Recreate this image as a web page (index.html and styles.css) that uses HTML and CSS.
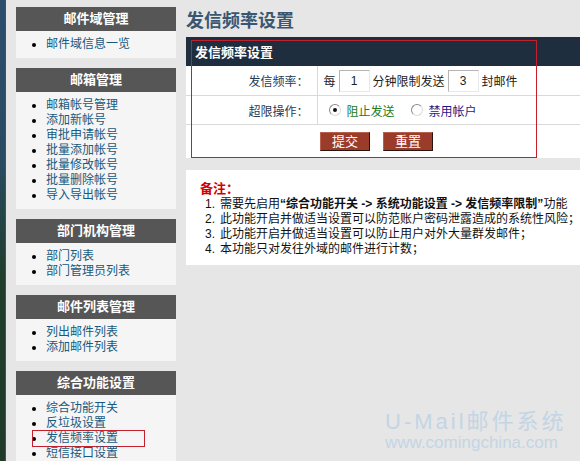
FILE: index.html
```html
<!DOCTYPE html>
<html lang="zh-CN">
<head>
<meta charset="utf-8">
<title>发信频率设置</title>
<link rel="stylesheet" href="styles.css">
</head>
<body>
<div class="page">
  <div class="strip"></div>
  <aside class="sidebar">
    <section class="panel">
      <h3 class="panel-head">邮件域管理</h3>
      <ul class="panel-list">
        <li><a>邮件域信息一览</a></li>
      </ul>
    </section>
    <section class="panel">
      <h3 class="panel-head">邮箱管理</h3>
      <ul class="panel-list">
        <li><a>邮箱帐号管理</a></li>
        <li><a>添加新帐号</a></li>
        <li><a>审批申请帐号</a></li>
        <li><a>批量添加帐号</a></li>
        <li><a>批量修改帐号</a></li>
        <li><a>批量删除帐号</a></li>
        <li><a>导入导出帐号</a></li>
      </ul>
    </section>
    <section class="panel">
      <h3 class="panel-head">部门机构管理</h3>
      <ul class="panel-list">
        <li><a>部门列表</a></li>
        <li><a>部门管理员列表</a></li>
      </ul>
    </section>
    <section class="panel">
      <h3 class="panel-head">邮件列表管理</h3>
      <ul class="panel-list">
        <li><a>列出邮件列表</a></li>
        <li><a>添加邮件列表</a></li>
      </ul>
    </section>
    <section class="panel">
      <h3 class="panel-head">综合功能设置</h3>
      <ul class="panel-list">
        <li><a>综合功能开关</a></li>
        <li><a>反垃圾设置</a></li>
        <li class="marked"><a>发信频率设置</a><span class="side-mark"></span></li>
        <li><a>短信接口设置</a></li>
      </ul>
    </section>
  </aside>

  <main class="main">
    <h1 class="title">发信频率设置</h1>
    <div class="form-wrap">
      <table class="form">
        <tr><th colspan="2" class="form-head">发信频率设置</th></tr>
        <tr class="row-a">
          <td class="label">发信频率：</td>
          <td class="value">
            <div class="inline">
              <span>每</span>
              <input class="num-input" type="text" value="1">
              <span>分钟限制发送</span>
              <input class="num-input" type="text" value="3">
              <span>封邮件</span>
            </div>
          </td>
        </tr>
        <tr class="row-b">
          <td class="label">超限操作：</td>
          <td class="value">
            <div class="inline radios">
              <span class="radio checked"></span><span class="opt-green">阻止发送</span>
              <span class="radio second"></span><span class="opt-navy">禁用帐户</span>
            </div>
          </td>
        </tr>
        <tr class="row-c">
          <td colspan="2" class="actions">
            <div class="btn-row">
              <button class="btn" type="button">提交</button>
              <button class="btn" type="button">重置</button>
            </div>
          </td>
        </tr>
      </table>
      <div class="annot"></div>
    </div>

    <div class="notes">
      <div class="notes-title">备注：</div>
      <div class="note"><span class="n">1.</span>需要先启用<b>“综合功能开关 -&gt; 系统功能设置 -&gt; 发信频率限制”</b>功能</div>
      <div class="note"><span class="n">2.</span>此功能开启并做适当设置可以防范账户密码泄露造成的系统性风险；</div>
      <div class="note"><span class="n">3.</span>此功能开启并做适当设置可以防止用户对外大量群发邮件；</div>
      <div class="note"><span class="n">4.</span>本功能只对发往外域的邮件进行计数；</div>
    </div>
  </main>

  <div class="watermark">
    <div class="wm-1">U-Mail邮件系统</div>
    <div class="wm-2">www.comingchina.com</div>
  </div>
</div>
</body>
</html>
```

FILE: styles.css
```css
html, body {
  margin: 0;
  padding: 0;
  overflow: hidden;
  width: 580px;
  height: 461px;
}

body {
  background: #e6e6e6;
  font-family: "Liberation Sans", "Noto Sans CJK SC", sans-serif;
  font-size: 12px;
  color: #222;
}

.page {
  display: flex;
  position: relative;
  height: 461px;
  align-items: flex-start;
}

.strip {
  width: 6px;
  align-self: stretch;
  flex-shrink: 0;
  background: linear-gradient(to bottom, #2d4d6d 0%, #2a4a62 35%, #203e2c 60%, #1f3a28 100%);
  box-shadow: inset -1px 0 0 #3c4c8c;
}

.sidebar {
  width: 160px;
  flex-shrink: 0;
  padding: 7px 0 0 10px;
  display: flex;
  flex-direction: column;
  gap: 10px;
}

.panel {
  background: #f5f5f5;
}

.panel-head {
  margin: 0;
  height: 24px;
  line-height: 24px;
  background: #565656;
  color: #fff;
  font-size: 13px;
  font-weight: bold;
  text-align: center;
}

.panel-list {
  margin: 0;
  padding: 6px 0 6px 30px;
  list-style: disc;
  color: #000;
}

.panel-list li {
  line-height: 15px;
  position: relative;
}

.panel-list a {
  color: #17597f;
  text-decoration: none;
}

.side-mark {
  position: absolute;
  left: -14px;
  top: -1px;
  width: 113px;
  height: 17px;
  box-sizing: border-box;
  border: 1px solid #c41f2a;
}

.main {
  width: 470px;
  flex-shrink: 0;
  margin-left: 10px;
  padding-top: 7px;
}

.title {
  margin: 0;
  font-size: 18px;
  line-height: 28px;
  font-weight: bold;
  color: #3b5671;
}

.form-wrap {
  position: relative;
  margin-top: 2px;
}

.form {
  width: 100%;
  border-collapse: collapse;
  background: #fff;
}

.form td, .form th {
  padding: 0;
}

.form-head {
  height: 29px;
  background: #1f2e3f;
  color: #fff;
  font-size: 13px;
  font-weight: bold;
  text-align: left;
  padding-left: 9px !important;
}

.row-a td { height: 29px; border-bottom: 1px solid #d9d9d9; }
.row-b td { height: 28px; border-bottom: 1px solid #d9d9d9; }
.row-c td { height: 33px; }

.label {
  width: 131px;
  box-sizing: border-box;
  text-align: right;
  padding-right: 8px !important;
  border-right: 1px solid #d9d9d9;
  color: #1f3a55;
}

.value {
  padding-left: 6px !important;
}

.inline {
  display: flex;
  align-items: center;
  gap: 3px;
}

.num-input {
  width: 31px;
  height: 22px;
  box-sizing: border-box;
  border: 1px solid;
  border-color: #b5b5b5 #e8e8e8 #e8e8e8 #b5b5b5;
  text-align: center;
  font-family: "Liberation Sans", sans-serif;
  font-size: 12px;
  color: #222;
  padding: 0;
  margin: 0;
  background: #fff;
}

.radios {
  gap: 0;
  padding-left: 5px;
}

.radio {
  width: 12px;
  height: 12px;
  box-sizing: border-box;
  border-radius: 50%;
  border: 1px solid;
  border-color: #8a8a8a #dcdcdc #dcdcdc #8a8a8a;
  background: #fff;
  position: relative;
  margin-right: 6px;
}

.radio.second {
  margin-left: 16px;
}

.radio.checked::after {
  content: "";
  position: absolute;
  left: 3px;
  top: 3px;
  width: 4px;
  height: 4px;
  border-radius: 50%;
  background: #111;
}

.opt-green { color: #217a21; }
.opt-navy { color: #1a1a88; }

.actions {
  padding-left: 134px !important;
  vertical-align: middle;
}

.btn-row {
  display: flex;
  gap: 13px;
}

.btn {
  width: 50px;
  height: 19px;
  padding: 0;
  margin: 0;
  background: #9b3c2b;
  color: #fff;
  font-family: "Liberation Sans", "Noto Sans CJK SC", sans-serif;
  font-size: 13px;
  line-height: 17px;
  border: 1px solid;
  border-color: #b8604e #2a1410 #2a1410 #b8604e;
}

.annot {
  position: absolute;
  left: 5px;
  top: 3px;
  width: 346px;
  height: 118px;
  box-sizing: border-box;
  border: 1px solid #c41f2a;
}

.notes {
  margin-top: 12px;
  background: #fff;
  padding: 10px 0 8px 14px;
  white-space: nowrap;
}

.notes-title {
  color: #d40000;
  font-weight: bold;
  font-size: 13px;
  line-height: 17px;
}

.note {
  line-height: 15px;
  padding-left: 5px;
  color: #111;
}

.note .n {
  display: inline-block;
  width: 15px;
}

.note b {
  font-weight: bold;
}

.watermark {
  position: absolute;
  left: 385px;
  top: 412px;
  color: #c3d5e5;
  font-family: "Liberation Sans", "Noto Sans CJK SC", sans-serif;
  white-space: nowrap;
}

.wm-1 {
  font-size: 22px;
  line-height: 20px;
  letter-spacing: 3px;
}

.wm-2 {
  font-size: 17px;
  line-height: 17px;
  margin-top: 2px;
}
```
